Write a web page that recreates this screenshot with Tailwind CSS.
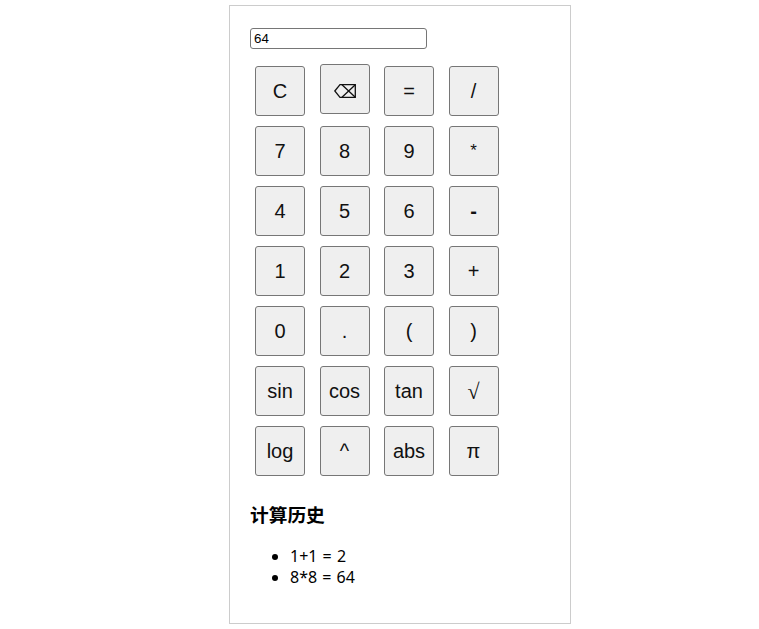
<!DOCTYPE html>
<html lang="zh-CN">

<head>
  <meta charset="UTF-8" />
  <meta name="viewport" content="width=device-width, initial-scale=1" />
  <title>计算器</title>
  <script src="https://cdn.jsdelivr.net/npm/@tailwindcss/browser@4"></script>
</head>

<body class="bg-white h-[629px] overflow-hidden font-['Noto_Sans','Noto_Sans_CJK_SC',sans-serif] text-black">

  <div class="w-[342px] h-[619px] mt-[5px] ml-[229px] border border-[#ccc] pt-[22px] pl-[20px] pr-[20px]">
    <!-- Display -->
    <input type="text" value="64"
      class="block w-[177px] h-[21px] border border-[#767676] rounded-[3px] px-[3px] text-[13.33px] font-['Liberation_Sans',sans-serif] outline-none" />

    <!-- Keypad -->
    <div class="grid grid-cols-[repeat(4,64.5px)] auto-rows-[60px] pl-[5px] mt-[17px] font-['Liberation_Sans',sans-serif] text-[20px] text-[#111]">
      <button class="w-[50px] h-[50px] bg-[#efefef] border border-[#767676] rounded-[3px]">C</button>
      <button class="w-[50px] h-[50px] bg-[#efefef] border border-[#767676] rounded-[3px] -mt-[2px] flex items-center justify-center">
        <svg class="translate-y-[2px]" width="22" height="14" viewBox="0 0 22 14" fill="none" stroke="#111" stroke-width="1.3">
          <path d="M0.8 7 L6 0.7 H21.3 V13.3 H6 Z" />
          <path d="M8 0.7 L21.3 13.3 M21.3 0.7 L8 13.3" />
        </svg>
      </button>
      <button class="w-[50px] h-[50px] bg-[#efefef] border border-[#767676] rounded-[3px]">=</button>
      <button class="w-[50px] h-[50px] bg-[#efefef] border border-[#767676] rounded-[3px]">/</button>

      <button class="w-[50px] h-[50px] bg-[#efefef] border border-[#767676] rounded-[3px]">7</button>
      <button class="w-[50px] h-[50px] bg-[#efefef] border border-[#767676] rounded-[3px]">8</button>
      <button class="w-[50px] h-[50px] bg-[#efefef] border border-[#767676] rounded-[3px]">9</button>
      <button class="w-[50px] h-[50px] bg-[#efefef] border border-[#767676] rounded-[3px] text-[17px]">*</button>

      <button class="w-[50px] h-[50px] bg-[#efefef] border border-[#767676] rounded-[3px]">4</button>
      <button class="w-[50px] h-[50px] bg-[#efefef] border border-[#767676] rounded-[3px]">5</button>
      <button class="w-[50px] h-[50px] bg-[#efefef] border border-[#767676] rounded-[3px]">6</button>
      <button class="w-[50px] h-[50px] bg-[#efefef] border border-[#767676] rounded-[3px] font-bold">-</button>

      <button class="w-[50px] h-[50px] bg-[#efefef] border border-[#767676] rounded-[3px]">1</button>
      <button class="w-[50px] h-[50px] bg-[#efefef] border border-[#767676] rounded-[3px]">2</button>
      <button class="w-[50px] h-[50px] bg-[#efefef] border border-[#767676] rounded-[3px]">3</button>
      <button class="w-[50px] h-[50px] bg-[#efefef] border border-[#767676] rounded-[3px]">+</button>

      <button class="w-[50px] h-[50px] bg-[#efefef] border border-[#767676] rounded-[3px]">0</button>
      <button class="w-[50px] h-[50px] bg-[#efefef] border border-[#767676] rounded-[3px]">.</button>
      <button class="w-[50px] h-[50px] bg-[#efefef] border border-[#767676] rounded-[3px]">(</button>
      <button class="w-[50px] h-[50px] bg-[#efefef] border border-[#767676] rounded-[3px]">)</button>

      <button class="w-[50px] h-[50px] bg-[#efefef] border border-[#767676] rounded-[3px]">sin</button>
      <button class="w-[50px] h-[50px] bg-[#efefef] border border-[#767676] rounded-[3px]">cos</button>
      <button class="w-[50px] h-[50px] bg-[#efefef] border border-[#767676] rounded-[3px]">tan</button>
      <button class="w-[50px] h-[50px] bg-[#efefef] border border-[#767676] rounded-[3px] font-['Liberation_Serif',serif] text-[22px]">√</button>

      <button class="w-[50px] h-[50px] bg-[#efefef] border border-[#767676] rounded-[3px]">log</button>
      <button class="w-[50px] h-[50px] bg-[#efefef] border border-[#767676] rounded-[3px]">^</button>
      <button class="w-[50px] h-[50px] bg-[#efefef] border border-[#767676] rounded-[3px]">abs</button>
      <button class="w-[50px] h-[50px] bg-[#efefef] border border-[#767676] rounded-[3px]">π</button>
    </div>

    <!-- History -->
    <h3 class="mt-[14px] text-[18.72px] leading-[28px] font-bold font-['Noto_Sans_CJK_SC',sans-serif]">计算历史</h3>
    <ul class="list-disc mt-[18px] pl-[40px] text-[16px] leading-[21px] [word-spacing:1px]">
      <li>1+1 = 2</li>
      <li>8*8 = 64</li>
    </ul>
  </div>

</body>

</html>
